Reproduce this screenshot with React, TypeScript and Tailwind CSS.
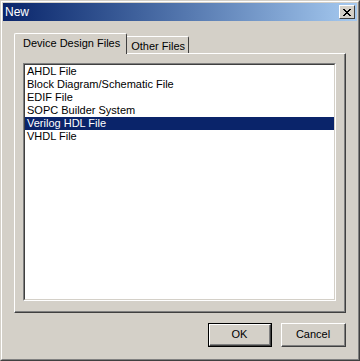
import React, { useState } from 'react';

const files = [
    'AHDL File',
    'Block Diagram/Schematic File',
    'EDIF File',
    'SOPC Builder System',
    'Verilog HDL File',
    'VHDL File',
];

export default function App() {
    const [selected, setSelected] = useState(4);
    const [tab, setTab] = useState(0);

    return (
        <div className="w-[360px] h-[361px] font-['Liberation_Sans',Arial,sans-serif] text-[11px] text-black select-none">
            {/* Window frame */}
            <div className="w-full h-full border border-t-[#d4d0c8] border-l-[#d4d0c8] border-b-[#404040] border-r-[#404040]">
                <div className="w-full h-full border border-t-white border-l-white border-b-[#808080] border-r-[#808080] bg-[#d4d0c8] p-[1px] flex flex-col">
                    {/* Title bar */}
                    <div className="h-[18px] flex items-center justify-between bg-gradient-to-r from-[#0a246a] to-[#a6caf0] pl-[2px] pr-[2px]">
                        <span className="text-white text-[12px] leading-none">New</span>
                        <button className="w-[16px] h-[14px] bg-[#d4d0c8] border border-t-white border-l-white border-b-[#404040] border-r-[#404040] flex items-center justify-center">
                            <svg width="8" height="7" viewBox="0 0 8 7" shapeRendering="crispEdges">
                                <path d="M0 0h2v1H0zM6 0h2v1H6zM1 1h2v1H1zM5 1h2v1H5zM2 2h4v1H2zM3 3h2v1H3zM2 4h4v1H2zM1 5h2v1H1zM5 5h2v1H5zM0 6h2v1H0zM6 6h2v1H6z" fill="#000" />
                            </svg>
                        </button>
                    </div>

                    {/* Body */}
                    <div className="flex-1 flex flex-col pt-[12px] pl-[11px] pr-[11px]">
                        {/* Tabs */}
                        <div className="flex items-end h-[20px] relative z-10">
                            <div
                                onClick={() => setTab(0)}
                                className="h-[21px] -mb-[1px] pl-[8px] pr-[6px] flex items-center bg-[#d4d0c8] border-t border-l border-r border-t-white border-l-white border-r-[#404040] rounded-tl-[2px] rounded-tr-[2px] leading-none"
                            >
                                <span className="pb-[1px]">Device Design Files</span>
                            </div>
                            <div
                                onClick={() => setTab(1)}
                                className="h-[17px] pl-[4px] pr-[3px] flex items-center bg-[#d4d0c8] border-t border-r border-t-white border-r-[#404040] rounded-tr-[2px] leading-none"
                            >
                                <span className="pt-[2px]">Other Files</span>
                            </div>
                        </div>

                        {/* Tab panel */}
                        <div className="h-[260px] w-[332px] border border-t-white border-l-white border-b-[#404040] border-r-[#404040]">
                            <div className="h-full w-full border-b border-r border-b-[#808080] border-r-[#808080] pt-[9px] pl-[8px] pr-[8px]">
                                {/* List box */}
                                <div className="h-[238px] w-[313px] border border-t-[#808080] border-l-[#808080] border-b-white border-r-white">
                                    <div className="h-full w-full border border-t-[#404040] border-l-[#404040] border-b-[#d4d0c8] border-r-[#d4d0c8] bg-white">
                                        {tab === 0 &&
                                            files.map((f, i) => (
                                                <div
                                                    key={f}
                                                    onClick={() => setSelected(i)}
                                                    className={
                                                        i === selected
                                                            ? 'h-[13px] leading-[13px] pl-[2px] bg-[#0a246a] text-white whitespace-nowrap'
                                                            : 'h-[13px] leading-[13px] pl-[2px] whitespace-nowrap'
                                                    }
                                                >
                                                    {f}
                                                </div>
                                            ))}
                                    </div>
                                </div>
                            </div>
                        </div>

                        {/* Buttons */}
                        <div className="flex justify-end gap-[9px] mt-[10px]">
                            <button className="w-[64px] h-[24px] border border-black">
                                <div className="w-full h-full border border-t-white border-l-white border-b-[#404040] border-r-[#404040] flex items-center justify-center">
                                    <div className="w-full h-full border-b border-r border-b-[#808080] border-r-[#808080] flex items-center justify-center">
                                        OK
                                    </div>
                                </div>
                            </button>
                            <button className="w-[65px] h-[24px] border border-t-white border-l-white border-b-[#404040] border-r-[#404040]">
                                <div className="w-full h-full border-b border-r border-b-[#808080] border-r-[#808080] flex items-center justify-center">
                                    Cancel
                                </div>
                            </button>
                        </div>
                    </div>
                </div>
            </div>
        </div>
    );
}
